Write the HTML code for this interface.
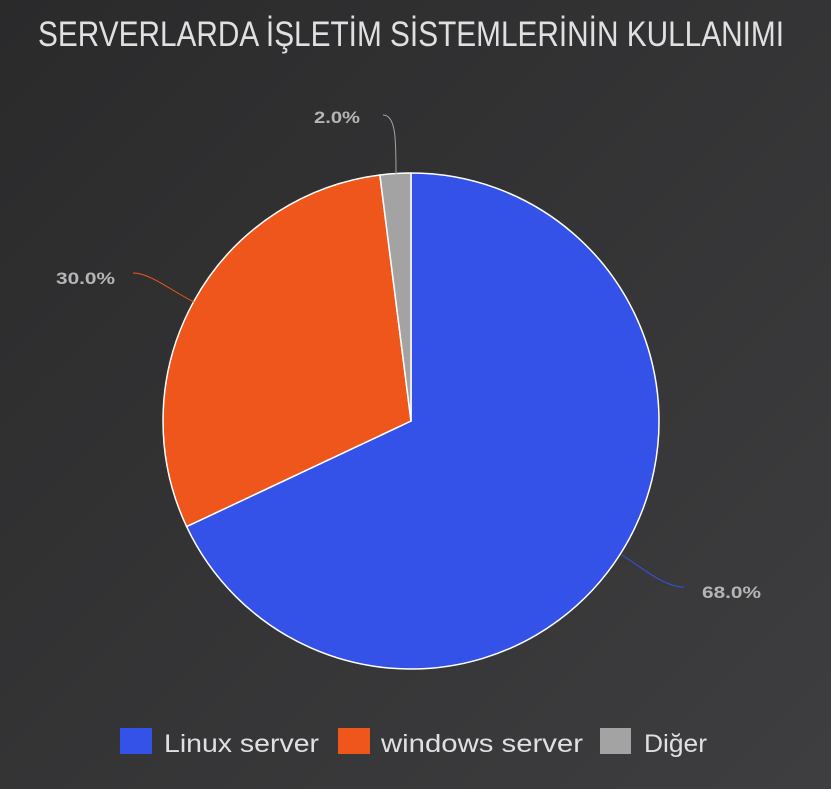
<!DOCTYPE html>
<html><head><meta charset="utf-8"><style>
html,body{margin:0;padding:0;}
body{width:831px;height:789px;overflow:hidden;background:linear-gradient(135deg,#2a2a2b 0%,#3e3e40 100%);}
svg{display:block;}
</style></head><body>
<svg width="831" height="789" viewBox="0 0 831 789" xmlns="http://www.w3.org/2000/svg">
<text x="38" y="46" font-family="Liberation Sans, sans-serif" font-size="35" fill="#e0e0e3" textLength="746" lengthAdjust="spacingAndGlyphs">SERVERLARDA İŞLETİM SİSTEMLERİNİN KULLANIMI</text>
<g stroke="#ffffff" stroke-width="1.5" stroke-linejoin="round">
<path d="M411,421 L411,173 A248,248 0 1 1 186.6,526.6 Z" fill="#3452e8"/>
<path d="M411,421 L186.6,526.6 A248,248 0 0 1 379.9,175 Z" fill="#ee561b"/>
<path d="M411,421 L379.9,175 A248,248 0 0 1 411,173 Z" fill="#a3a3a3"/>
</g>
<g fill="none" stroke-width="1">
<path d="M396,174 C396,140 396,115 383,115" stroke="#a3a3a3"/>
<path d="M194,302 C170,290 150,273 133,273" stroke="#ee561b"/>
<path d="M622,555 C645,570 665,587 684,587" stroke="#3452e8"/>
</g>
<g font-family="Liberation Sans, sans-serif" font-size="17" font-weight="bold" fill="#b5b5b5" lengthAdjust="spacingAndGlyphs">
<text x="314" y="123" textLength="46" lengthAdjust="spacingAndGlyphs">2.0%</text>
<text x="56" y="284" textLength="59" lengthAdjust="spacingAndGlyphs">30.0%</text>
<text x="702" y="598" textLength="59" lengthAdjust="spacingAndGlyphs">68.0%</text>
</g>
<rect x="120" y="728" width="32" height="26" fill="#3452e8"/>
<rect x="338" y="728" width="32" height="26" fill="#ee561b"/>
<rect x="600" y="728" width="31" height="26" fill="#a3a3a3"/>
<g font-family="Liberation Sans, sans-serif" font-size="25" fill="#e0e0e3">
<text x="164" y="752" textLength="155" lengthAdjust="spacingAndGlyphs">Linux server</text>
<text x="381" y="752" textLength="202" lengthAdjust="spacingAndGlyphs">windows server</text>
<text x="644" y="752" textLength="63" lengthAdjust="spacingAndGlyphs">Diğer</text>
</g>
</svg>
</body></html>
